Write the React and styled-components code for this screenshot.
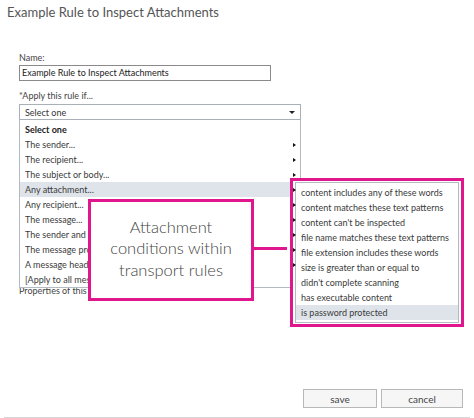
import React from 'react';
import styled, { createGlobalStyle } from 'styled-components';

const GlobalStyle = createGlobalStyle`
  html, body {
    margin: 0;
    padding: 0;
    background: #ffffff;
  }
  body {
    font-family: Lato, "Open Sans", "Liberation Sans", sans-serif;
  }
`;

const MAGENTA = '#e0168c';

const Page = styled.div`
  position: relative;
  width: 474px;
  height: 418px;
  display: flex;
  flex-direction: column;
  overflow: hidden;
  background: #fff;
`;

const Title = styled.h1`
  margin: 0;
  padding: 3px 0 0 7px;
  font-size: 13px;
  line-height: 19px;
  font-weight: 400;
  color: #555;
`;

const Form = styled.div`
  margin-top: 30px;
  padding-left: 19px;
  display: flex;
  flex-direction: column;
  align-items: flex-start;
`;

const Label = styled.div`
  font-size: 9px;
  line-height: 12px;
  color: #444;
  margin-top: ${p => p.$gap || 0}px;
`;

const TextInput = styled.div`
  box-sizing: border-box;
  width: 252px;
  height: 16px;
  margin-top: 1px;
  border: 1px solid #8a8a8a;
  padding: 0 2px;
  font-size: 9px;
  line-height: 14px;
  color: #222;
`;

const SelectWrap = styled.div`
  position: relative;
  margin-top: 2px;
  width: 282px;
`;

const SelectBox = styled.div`
  box-sizing: border-box;
  height: 16px;
  border: 1px solid #aab0b8;
  padding: 0 5px;
  display: flex;
  align-items: center;
  justify-content: space-between;
  font-size: 9px;
  color: #333;
`;

const DownCaret = styled.span`
  width: 0;
  height: 0;
  border-left: 3px solid transparent;
  border-right: 3px solid transparent;
  border-top: 3px solid #222;
`;

const List = styled.div`
  position: absolute;
  top: 100%;
  left: 0;
  box-sizing: border-box;
  width: ${p => p.$width}px;
  padding-top: 2px;
  border: 1px solid #b4bac2;
  border-top: none;
  background: #fff;
`;

const Row = styled.div`
  position: relative;
  height: 15px;
  padding: 0 5px;
  display: flex;
  align-items: center;
  justify-content: space-between;
  font-size: 9px;
  font-weight: ${p => (p.$bold ? 700 : 400)};
  color: ${p => (p.$bold ? '#222' : '#3a3a3a')};
  background: ${p => (p.$active ? '#dfe4ea' : 'transparent')};
  white-space: nowrap;
`;

const RightCaret = styled.span`
  position: relative;
  z-index: 5;
  margin-right: -1px;
  width: 0;
  height: 0;
  border-top: 2.5px solid transparent;
  border-bottom: 2.5px solid transparent;
  border-left: 3px solid #111;
`;

const Below = styled.div`
  font-size: 9px;
  line-height: 12px;
  color: #444;
  margin-top: 165px;
`;

const SubFrame = styled.div`
  position: absolute;
  left: 271px;
  top: 74px;
  z-index: 2;
  box-sizing: border-box;
  width: 174px;
  height: 149px;
  border: 3px solid ${MAGENTA};
  background: #fff;
  padding: 1px 2px;
`;

const SubList = styled.div`
  box-sizing: border-box;
  height: 100%;
  border: 1px solid #b4bac2;
  padding-top: 2px;
`;

const Callout = styled.div`
  position: absolute;
  left: 88px;
  top: 199px;
  z-index: 3;
  box-sizing: border-box;
  width: 166px;
  height: 102px;
  border: 3px solid ${MAGENTA};
  background: #fff;
  display: flex;
  align-items: center;
  justify-content: center;
  text-align: center;
  font-size: 16.5px;
  font-weight: 300;
  line-height: 21.5px;
  color: #444;
  padding-bottom: 2px;

  &::after {
    content: '';
    position: absolute;
    left: 100%;
    top: 45px;
    width: 36px;
    height: 3px;
    background: ${MAGENTA};
  }
`;

const Footer = styled.div`
  margin-top: auto;
  display: flex;
  justify-content: flex-end;
  gap: 4px;
  padding-right: 11px;
`;

const Button = styled.div`
  box-sizing: border-box;
  width: ${p => p.$w}px;
  height: 19px;
  border: 1px solid #b8b8b8;
  background: #f6f6f6;
  display: flex;
  align-items: center;
  justify-content: center;
  font-size: 10px;
  color: #444;
`;

const BottomRule = styled.div`
  margin: 9px 4px 0;
  height: 1px;
  background: #d6d6d6;
`;

const conditions = [
  { label: 'Select one', bold: true },
  { label: 'The sender...', sub: true },
  { label: 'The recipient...', sub: true },
  { label: 'The subject or body...', sub: true },
  { label: 'Any attachment...', sub: true, active: true },
  { label: 'Any recipient...', sub: true },
  { label: 'The message...', sub: true },
  { label: 'The sender and recipient...', sub: true },
  { label: 'The message properties...', sub: true },
  { label: 'A message header...', sub: true },
  { label: '[Apply to all messages]' },
];

const attachmentConditions = [
  'content includes any of these words',
  'content matches these text patterns',
  "content can't be inspected",
  'file name matches these text patterns',
  'file extension includes these words',
  'size is greater than or equal to',
  "didn't complete scanning",
  'has executable content',
  'is password protected',
];

export default function App() {
  return (
    <Page>
      <GlobalStyle />
      <Title>Example Rule to Inspect Attachments</Title>
      <Form>
        <Label>Name:</Label>
        <TextInput>Example Rule to Inspect Attachments</TextInput>
        <Label $gap={9}>*Apply this rule if...</Label>
        <SelectWrap>
          <SelectBox>
            <span>Select one</span>
            <DownCaret />
          </SelectBox>
          <List $width={282}>
            {conditions.map(c => (
              <Row key={c.label} $bold={c.bold} $active={c.active}>
                <span>{c.label}</span>
                {c.sub && <RightCaret />}
              </Row>
            ))}
          </List>
          <SubFrame>
            <SubList>
              {attachmentConditions.map((label, i) => (
                <Row key={label} $active={i === attachmentConditions.length - 1}>
                  <span>{label}</span>
                </Row>
              ))}
            </SubList>
          </SubFrame>
        </SelectWrap>
        <Below>Properties of this rule...</Below>
      </Form>
      <Callout>
        Attachment
        <br />
        conditions within
        <br />
        transport rules
      </Callout>
      <Footer>
        <Button $w={74}>save</Button>
        <Button $w={82}>cancel</Button>
      </Footer>
      <BottomRule />
    </Page>
  );
}
